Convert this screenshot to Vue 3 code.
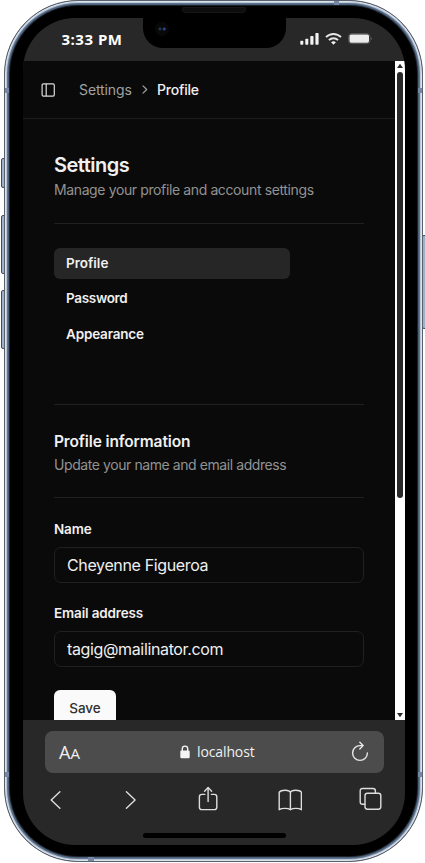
<script setup>
import { ref } from 'vue'

const links = ['Profile', 'Password', 'Appearance']
const active = ref('Profile')
const name = ref('Cheyenne Figueroa')
const email = ref('tagig@mailinator.com')
</script>

<template>
  <div class="stage">
    <i class="key mute"></i>
    <i class="key up"></i>
    <i class="key down"></i>
    <i class="key power"></i>
    <div class="phone">
      <i class="band b1"></i><i class="band b2"></i><i class="band b3"></i>
      <i class="band b4"></i><i class="band b5"></i><i class="band b6"></i>
      <i class="speaker"></i>
      <div class="screen">
        <div class="status">
          <span class="time">3:33 PM</span>
          <div class="signals">
            <svg width="20" height="14" viewBox="0 0 20 14" fill="#f2f2f2">
              <rect x="0.3" y="8.7" width="3" height="4" rx="0.8" />
              <rect x="5.3" y="6.7" width="3" height="6" rx="0.8" />
              <rect x="10.3" y="4" width="3.2" height="8.7" rx="0.8" />
              <rect x="15.4" y="1" width="3.2" height="11.7" rx="0.8" />
            </svg>
            <svg class="wifi" width="17" height="14" viewBox="0 0 17 14" fill="none" stroke="#e6e6e6" stroke-width="1.8">
              <path d="M1 5.2C5.1 0.9 11.9 0.9 16 5.2" />
              <path d="M3.9 8.2C6.5 5.6 10.5 5.6 13.1 8.2" />
              <path d="M6.1 10.3C7.5 9 9.5 9 10.9 10.3L8.5 12.8Z" fill="#f2f2f2" stroke="none" />
            </svg>
            <svg class="battery" width="25" height="12" viewBox="0 0 25 12">
              <rect x="0.5" y="0.6" width="21.6" height="10" rx="3" fill="none" stroke="#555" />
              <rect x="1.5" y="1.5" width="19.5" height="8.2" rx="1.6" fill="#ececec" />
              <path d="M23 4.2Q24.6 5.7 23 7.3Z" fill="#777" />
            </svg>
          </div>
          <div class="notch"><i class="lens"></i></div>
        </div>

        <div class="viewport">
          <div class="page">
            <header>
              <svg width="14" height="14" viewBox="0 0 14 14" fill="none" stroke="#dcdcdc" stroke-width="1.2">
                <rect x="1.1" y="0.9" width="12.2" height="12.2" rx="1.3" />
                <path d="M5.2 0.9V13.1" />
              </svg>
              <nav class="crumbs">
                <span class="parent">Settings</span>
                <svg width="6" height="9" viewBox="0 0 6 9" fill="none" stroke="#a1a1a1" stroke-width="1.2" stroke-linecap="round" stroke-linejoin="round">
                  <path d="M1 0.8L4.7 4.5L1 8.2" />
                </svg>
                <span class="current">Profile</span>
              </nav>
            </header>
            <main>
              <h1>Settings</h1>
              <p class="intro">Manage your profile and account settings</p>
              <hr class="first" />
              <nav class="menu">
                <a v-for="link in links" :key="link" :class="['link', link.toLowerCase(), { active: link === active }]" @click="active = link">{{ link }}</a>
              </nav>
              <hr class="second" />
              <h2>Profile information</h2>
              <p class="hint">Update your name and email address</p>
              <hr class="third" />
              <form @submit.prevent>
                <label class="l-name" for="name">Name</label>
                <input id="name" v-model="name" />
                <label class="l-email" for="email">Email address</label>
                <input id="email" v-model="email" />
                <button><span>Save</span></button>
              </form>
            </main>
          </div>
          <div class="scrollbar">
            <svg width="8" height="6" viewBox="0 0 8 6"><path d="M4 0.8L7 5H1Z" fill="#26282a" /></svg>
            <div class="thumb"></div>
            <svg width="8" height="6" viewBox="0 0 8 6"><path d="M4 5.2L7 1H1Z" fill="#26282a" /></svg>
          </div>
        </div>

        <footer>
          <div class="address">
            <span class="aa">A<small>A</small></span>
            <span class="host">
              <svg width="10" height="14" viewBox="0 0 10 14">
                <path d="M2.3 6V3.8A2.7 2.7 0 0 1 7.7 3.8V6" fill="none" stroke="#f4f4f4" stroke-width="1.4" />
                <rect x="0.3" y="5.6" width="9.4" height="7.6" rx="1.2" fill="#f4f4f4" />
              </svg>
              <span>localhost</span>
            </span>
            <svg class="reload" width="18" height="22" viewBox="0 0 18 22" fill="none" stroke="#e8e8e8" stroke-width="1.4" stroke-linecap="round" stroke-linejoin="round">
              <path d="M11.6 4.6H9A7.4 7.4 0 1 0 16.4 12" />
              <path d="M8.8 1.2L12.1 4.6L8.8 8" />
            </svg>
          </div>
          <div class="tools">
            <svg class="back" width="12" height="20" viewBox="0 0 12 20"><path d="M9.9 1.8L1.2 10L9.9 18.2" /></svg>
            <svg class="forward" width="12" height="20" viewBox="0 0 12 20"><path d="M1.4 1.8L10.1 10L1.4 18.2" /></svg>
            <svg class="share" width="20" height="26" viewBox="0 0 20 26">
              <path d="M6.8 8.4H3.8Q1.4 8.4 1.4 10.8V21.2Q1.4 23.6 3.8 23.6H16.4Q18.8 23.6 18.8 21.2V10.8Q18.8 8.4 16.4 8.4H13.4" />
              <path d="M10.1 15.5V1.6M6.6 5.2L10.1 1.4L13.6 5.2" />
            </svg>
            <svg class="book" width="24" height="22" viewBox="0 0 24 22">
              <path d="M12.4 3.4C11.4 0.6 3.3 0.6 1.2 3.2V20.7C3.8 18.9 10 18.9 12.4 20.7C14.8 18.9 21 18.9 23.4 20.7V3.2C21.5 0.6 13.4 0.6 12.4 3.4V20.7" />
            </svg>
            <svg class="tabs" width="24" height="24" viewBox="0 0 24 24">
              <path d="M5.8 17.3H3.6Q1.2 17.3 1.2 14.9V3.9Q1.2 1.5 3.6 1.5H14Q16.4 1.5 16.4 3.9V6" />
              <rect x="6" y="6.2" width="15.8" height="16" rx="2.4" />
            </svg>
          </div>
          <div class="home"></div>
        </footer>
      </div>
    </div>
  </div>
</template>

<style>
html, body { margin: 0; background: #fff; overflow: hidden; }
</style>

<style scoped>
* { box-sizing: border-box; }
.stage {
  position: relative;
  width: 425px;
  height: 863px;
  padding: 0 2px 1px 4px;
  overflow: hidden;
  font-family: Inter, "Liberation Sans", sans-serif;
  color: #f0f0f0;
}
.key {
  position: absolute;
  left: 1px;
  width: 5px;
  background: #9fb0c7;
  border: 1px solid #3f4b5d;
  border-radius: 2px 0 0 2px;
}
.mute { top: 158px; height: 30px; }
.up { top: 215px; height: 59px; }
.down { top: 290px; height: 59px; }
.power { left: 422px; top: 235px; height: 94px; }
.phone {
  position: relative;
  height: 862px;
  padding: 17px 17px 16px 18px;
  border: 1px solid #59616d;
  border-radius: 74px;
  background: #000;
  box-shadow: inset 0 0 0 1px #dce2eb, inset 0 0 0 2px #bcc7d6, inset 0 0 0 3px #5f7693, inset 0 0 0 4px #4b5f79, inset 0 0 0 5px #1d2228;
}
.band { position: absolute; background: #7688a6; }
.b1 { left: 0; top: 87px; width: 4px; height: 5px; }
.b2 { right: 0; top: 87px; width: 4px; height: 5px; }
.b3 { left: 0; top: 771px; width: 4px; height: 5px; }
.b4 { right: 0; top: 771px; width: 4px; height: 5px; }
.b5 { left: 329px; top: 0; width: 5px; height: 4px; }
.b6 { left: 83px; bottom: 0; width: 6px; height: 4px; }
.speaker { position: absolute; left: 177px; top: 6px; width: 64px; height: 6px; background: #0d0d0d; border: 1px solid #151515; border-radius: 0 0 3px 3px; }
.screen {
  display: flex;
  flex-direction: column;
  height: 827px;
  border-radius: 52px;
  overflow: hidden;
  background: #282828;
}
.status {
  position: relative;
  flex: 0 0 43px;
  display: flex;
  justify-content: space-between;
  padding: 0 32px 0 38.5px;
}
.time { font: 700 15px/20px "Open Sans", sans-serif; letter-spacing: 0.5px; margin-top: 11px; white-space: nowrap; color: #fff; }
.signals { display: flex; align-items: flex-start; padding-top: 14px; }
.wifi { margin-left: 5px; }
.battery { margin: 1px 0 0 6px; }
.notch {
  position: absolute;
  left: 120px;
  top: 0;
  width: 143px;
  height: 30px;
  background: #000;
  border-radius: 0 0 20px 20px;
}
.lens {
  position: absolute;
  left: 12px;
  top: 4px;
  width: 14px;
  height: 14px;
  border-radius: 50%;
  background: radial-gradient(circle at 35% 50%, #173b4b 0 1px, transparent 2px), radial-gradient(circle at 66% 50%, #2b3f9b 0 1px, transparent 2px), #080808;
}
.viewport { flex: 0 0 659px; display: flex; overflow: hidden; background: #0a0a0a; }
.page { flex: 1; min-width: 0; }
header {
  height: 58px;
  display: flex;
  align-items: center;
  padding-left: 18px;
  border-bottom: 1px solid #1d1d1d;
}
.crumbs { display: flex; align-items: center; margin-left: 24px; font-size: 14px; line-height: 20px; }
.crumbs svg { margin: 0 9px 0 10px; }
.parent { width: 53px; color: #a1a1a1; letter-spacing: -0.1px; white-space: nowrap; }
.current { font-weight: 500; letter-spacing: -0.2px; }
main { width: 341px; padding: 33px 0 0 31px; }
h1, h2, p { margin: 0; white-space: nowrap; }
h1 { font-size: 20px; line-height: 27px; font-weight: 600; letter-spacing: -0.5px; }
p { font-size: 14px; line-height: 20px; color: #929292; letter-spacing: -0.38px; }
.intro { margin-top: 1px; }
.hint { margin-top: 1px; letter-spacing: -0.42px; }
hr { height: 1px; margin: 0; border: 0; background: #202020; }
.first { margin-top: 23px; }
.second { margin-top: 54px; }
.third { margin-top: 22px; }
.menu { display: flex; flex-direction: column; gap: 4px; width: 236px; margin-top: 24px; }
.link { height: 31.3px; padding: 0 12px; line-height: 31px; font-size: 13.5px; font-weight: 600; border-radius: 6px; letter-spacing: -0.18px; }
.profile { letter-spacing: 0; }
.password { letter-spacing: -0.32px; }
.active { background: #262626; }
h2 { margin-top: 25px; font-size: 15.5px; line-height: 24px; font-weight: 600; letter-spacing: -0.13px; }
form { display: flex; flex-direction: column; align-items: flex-start; padding-top: 22px; }
label { font-size: 13.5px; line-height: 18px; font-weight: 600; letter-spacing: -0.15px; }
input {
  width: 310px;
  height: 36px;
  margin: 9px 0 21px;
  padding: 1px 12px 0;
  border: 1px solid #202020;
  border-radius: 7px;
  outline: 0;
  background: transparent;
  color: #f0f0f0;
  font: 400 16px/22px Inter, sans-serif;
  letter-spacing: -0.36px;
}
button {
  width: 62px;
  height: 36px;
  margin-top: 2px;
  padding: 0;
  border: 0;
  border-radius: 6px;
  background: #fafafa;
  color: #303030;
  font: 500 13.5px/37px Inter, sans-serif;
}
.scrollbar { width: 10px; display: flex; flex-direction: column; align-items: center; background: #fff; padding: 2px 0; }
.thumb { width: 6px; height: 426px; margin: 3px 0 auto; border-radius: 3px; background: #26282a; }
footer { flex: 1; position: relative; padding: 11px 21px 0 22px; }
.address {
  display: flex;
  align-items: center;
  height: 42px;
  border-radius: 8px;
  background: #4c4c4c;
  padding: 0 15px 0 14px;
}
.aa { width: 121px; font: 400 18px/22px "Open Sans", sans-serif; }
.aa small { font-size: 15px; }
.host { flex: 1; display: flex; align-items: center; gap: 7px; font: 400 14px/20px "Open Sans", sans-serif; letter-spacing: -0.12px; white-space: nowrap; }
.tools { display: flex; align-items: center; height: 26px; margin: 13px 0 0 5px; }
.tools svg { fill: none; stroke: #dedede; stroke-width: 1.4; stroke-linecap: round; stroke-linejoin: round; }
.tools .back { margin-top: 2px; }
.tools .forward { margin: 2px 0 0 63px; }
.tools .share { margin: -1px 0 0 61px; }
.tools .book { margin: 1px 0 0 60px; }
.tools .tabs { margin-left: 57px; }
.home { width: 143px; height: 5px; margin: 21px 0 0 98px; border-radius: 3px; background: #000; }
</style>
